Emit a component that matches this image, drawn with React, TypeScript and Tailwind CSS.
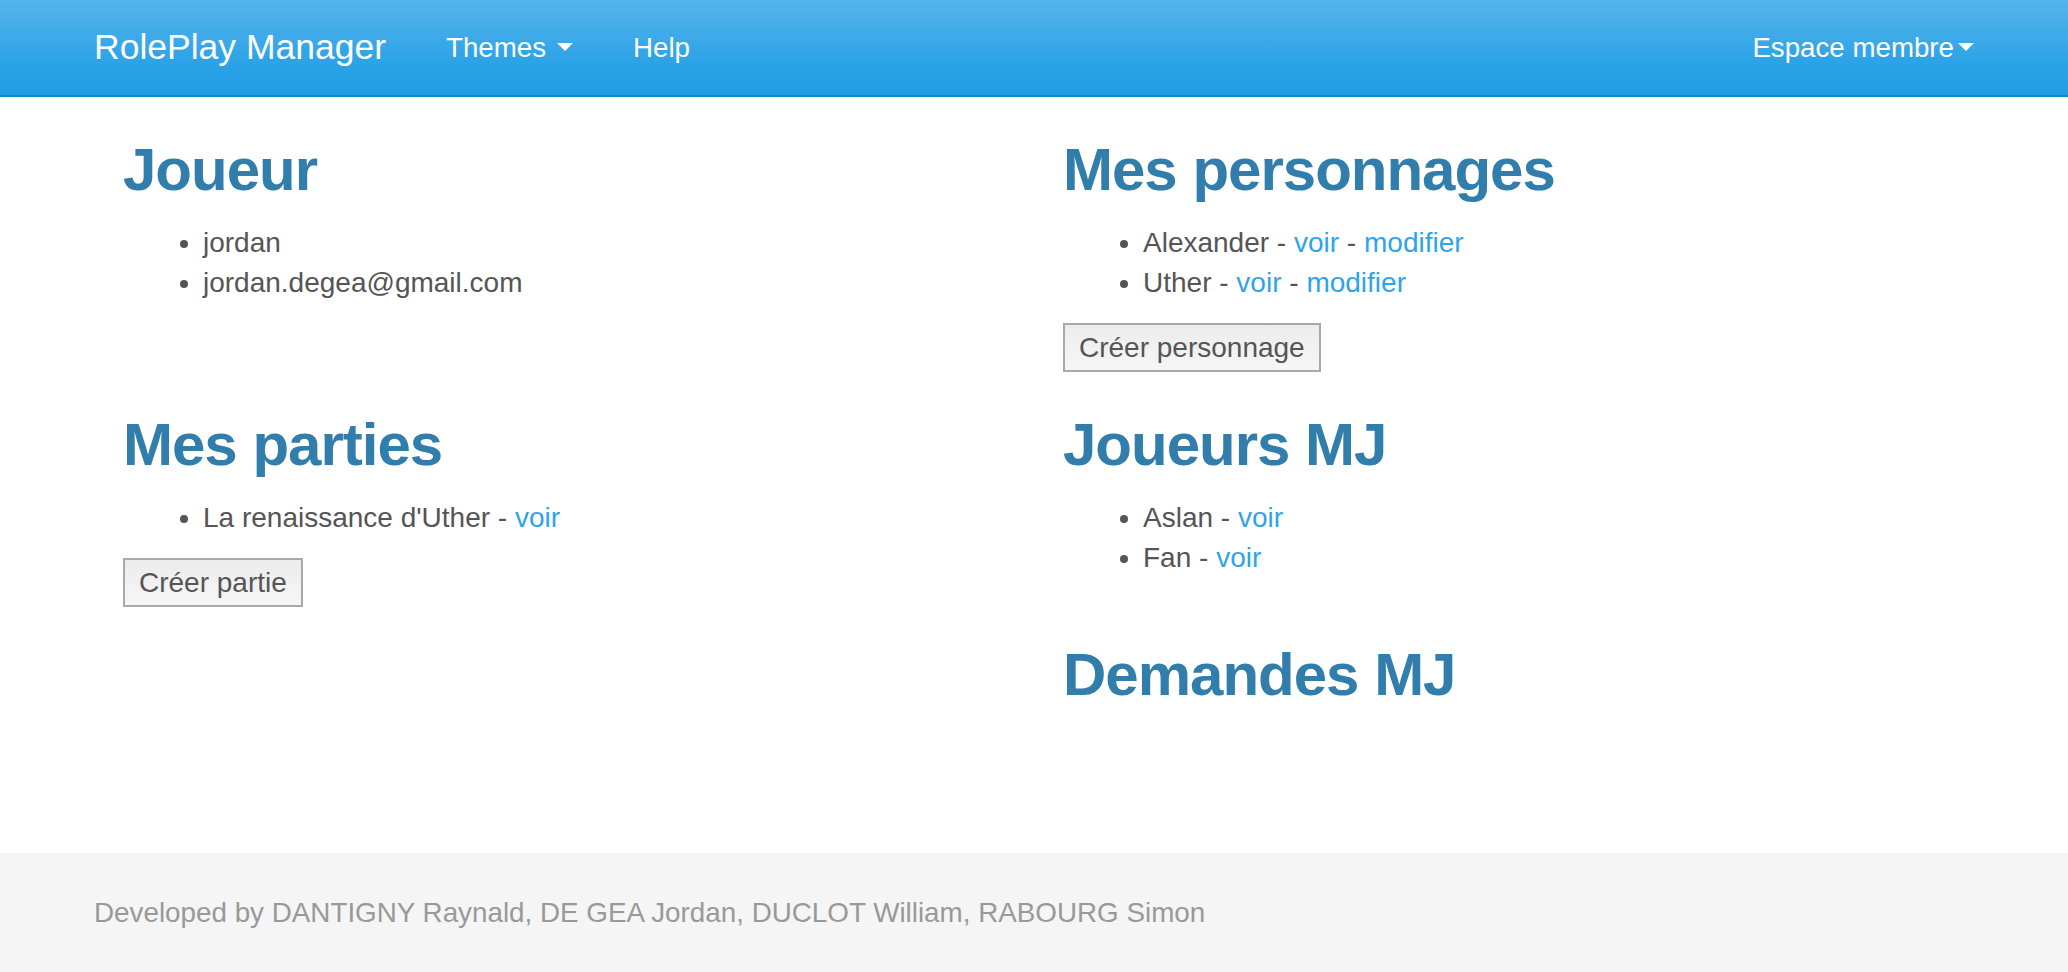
import type { ReactNode } from "react";

function Caret() {
  return (
    <span className="inline-block h-0 w-0 border-x-[8px] border-t-[8px] border-x-transparent border-t-white align-middle" />
  );
}

function Heading({ children, className = "mt-10" }: { children: ReactNode; className?: string }) {
  return (
    <h1 className={`${className} mb-5 text-[60px] leading-[66px] font-bold tracking-[-1px] text-[#317eac]`}>{children}</h1>
  );
}

function Link({ children }: { children: ReactNode }) {
  return <a href="#" className="text-[#2fa4e7]">{children}</a>;
}

function List({ children }: { children: ReactNode }) {
  return <ul className="mb-5 list-disc pl-[80px] leading-[40px] marker:text-[#555]">{children}</ul>;
}

function Button({ children }: { children: ReactNode }) {
  return (
    <button className="h-[49px] border-2 border-[#a9a9a9] bg-linear-to-b from-[#ececec] to-[#f6f6f6] px-[14px] text-[28px] leading-[40px] text-[#555]">
      {children}
    </button>
  );
}

export default function App() {
  return (
    <div className="flex min-h-screen flex-col bg-white font-['Liberation_Sans',Arial,sans-serif] text-[28px] text-[#555]">
      {/* Navbar */}
      <nav className="h-[97px] border-b-2 border-[#178acc] bg-linear-to-b from-[#54b4eb] via-[#2fa4e7] via-60% to-[#1d9ce5]">
        <div className="mx-auto flex h-full w-[1940px] items-center px-[30px] text-white">
          <a href="#" className="pr-[30px] text-[35.5px]">RolePlay Manager</a>
          <a href="#" className="flex items-center gap-[11px] px-[30px] text-[27.7px]">
            Themes <Caret />
          </a>
          <a href="#" className="px-[30px] text-[27.7px]">Help</a>
          <a href="#" className="-mr-[30px] ml-auto flex items-center gap-[4px] px-[30px] text-[27.7px]">
            Espace membre<Caret />
          </a>
        </div>
      </nav>

      {/* Content */}
      <main className="flex-1">
        <div className="mx-auto grid w-[1940px] grid-cols-2">
          <section className="pl-[59px] pr-[30px]">
            <Heading>Joueur</Heading>
            <List>
              <li>jordan</li>
              <li>jordan.degea@gmail.com</li>
            </List>
          </section>
          <section className="pl-[29px] pr-[30px]">
            <Heading>Mes personnages</Heading>
            <List>
              <li>Alexander - <Link>voir</Link> - <Link>modifier</Link></li>
              <li>Uther - <Link>voir</Link> - <Link>modifier</Link></li>
            </List>
            <Button>Créer personnage</Button>
          </section>

          <section className="pl-[59px] pr-[30px]">
            <Heading>Mes parties</Heading>
            <List>
              <li>La renaissance d'Uther - <Link>voir</Link></li>
            </List>
            <Button>Créer partie</Button>
          </section>
          <section className="pl-[29px] pr-[30px]">
            <Heading>Joueurs MJ</Heading>
            <List>
              <li>Aslan - <Link>voir</Link></li>
              <li>Fan - <Link>voir</Link></li>
            </List>
            <Heading className="mt-[64px]">Demandes MJ</Heading>
          </section>
        </div>
      </main>

      {/* Footer */}
      <footer className="flex h-[119px] items-center bg-[#f5f5f5]">
        <div className="mx-auto w-[1940px] px-[30px] text-[27.8px] text-[#999]">
          Developed by DANTIGNY Raynald, DE GEA Jordan, DUCLOT William, RABOURG Simon
        </div>
      </footer>
    </div>
  );
}
